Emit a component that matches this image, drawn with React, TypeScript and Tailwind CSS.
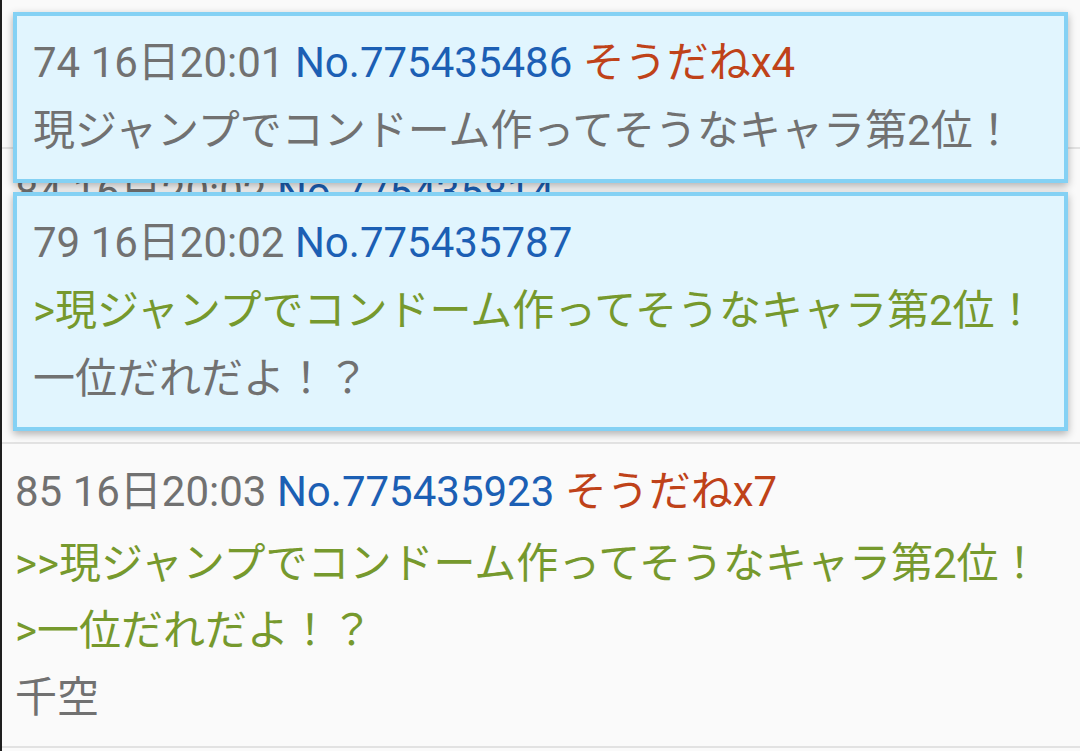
import React from 'react';

type Part = { text: string; tone: 'gray' | 'quote' };

type Post = {
  num: number;
  time: string;
  no: string;
  sodane?: number;
  pad?: string;
  lines: Part[];
};

const FONT = { fontFamily: 'Roboto, "Noto Sans CJK JP", sans-serif' };

const TONES = {
  gray: 'text-[#717171]',
  quote: 'text-[#76992d]',
};

const threadPosts: Post[] = [
  {
    num: 73,
    time: '16日20:01',
    no: '775435471',
    pad: 'pt-[10px] pb-[10px]',
    lines: [
      { text: '現ジャンプでコンドーム作ってそうなキャラ第1位！', tone: 'gray' },
      { text: 'だれだよ', tone: 'gray' },
    ],
  },
  {
    num: 84,
    time: '16日20:02',
    no: '775435814',
    pad: 'pt-[10px] pb-[10px]',
    lines: [
      { text: '>現ジャンプでコンドーム作ってそうなキャラ第2位！', tone: 'quote' },
      { text: 'ゴムは作れるし', tone: 'gray' },
      { text: '', tone: 'gray' },
    ],
  },
  {
    num: 85,
    time: '16日20:03',
    no: '775435923',
    sodane: 7,
    lines: [
      { text: '>>現ジャンプでコンドーム作ってそうなキャラ第2位！', tone: 'quote' },
      { text: '>一位だれだよ！？', tone: 'quote' },
      { text: '千空', tone: 'gray' },
    ],
  },
  {
    num: 86,
    time: '16日20:03',
    no: '775435951',
    lines: [{ text: '', tone: 'gray' }],
  },
];

const popups: Post[] = [
  {
    num: 74,
    time: '16日20:01',
    no: '775435486',
    sodane: 4,
    lines: [{ text: '現ジャンプでコンドーム作ってそうなキャラ第2位！', tone: 'gray' }],
  },
  {
    num: 79,
    time: '16日20:02',
    no: '775435787',
    lines: [
      { text: '>現ジャンプでコンドーム作ってそうなキャラ第2位！', tone: 'quote' },
      { text: '一位だれだよ！？', tone: 'gray' },
    ],
  },
];

const Header = ({ post }: { post: Post }) => (
  <div className="leading-[68px] whitespace-nowrap text-[#717171]">
    {post.num} {post.time} <span className="text-[#1c5fb4]">No.{post.no}</span>
    {post.sodane ? <span className="text-[#bf4219]"> そうだねx{post.sodane}</span> : null}
  </div>
);

const Body = ({ post, leading }: { post: Post; leading: string }) => (
  <div className={leading}>
    {post.lines.map((l, i) => (
      <div key={i} className={`whitespace-nowrap ${TONES[l.tone]}`}>
        {l.text || '\u00a0'}
      </div>
    ))}
  </div>
);

const ThreadPost = ({ post }: { post: Post }) => (
  <div className={`border-b-2 border-[#e2e2e2] pl-[13px] pr-3 ${post.pad ?? 'pt-[14px] pb-[15px]'}`}>
    <Header post={post} />
    <div className="mt-1">
      <Body post={post} leading="leading-[67px]" />
    </div>
  </div>
);

const Popup = ({ post, top }: { post: Post; top: string }) => (
  <div
    className={`absolute left-[11px] right-[12px] ${top} border-4 border-[#84d1f4] bg-[#e1f5fe] px-[16px] pt-[13px] pb-[14px] shadow-[0_3px_8px_rgba(0,0,0,0.3)]`}
  >
    <Header post={post} />
    <Body post={post} leading="leading-[68px]" />
  </div>
);

export default function App() {
  return (
    <div
      className="relative h-[751px] w-[1080px] overflow-hidden border-l-2 border-[#1e1e1e] bg-[#fafafa] text-[42px]"
      style={FONT}
    >
      <div className="-mt-[79px]">
        {threadPosts.map((p) => (
          <ThreadPost key={p.num} post={p} />
        ))}
      </div>

      <Popup post={popups[0]} top="top-[12px]" />
      <Popup post={popups[1]} top="top-[192px]" />
    </div>
  );
}
